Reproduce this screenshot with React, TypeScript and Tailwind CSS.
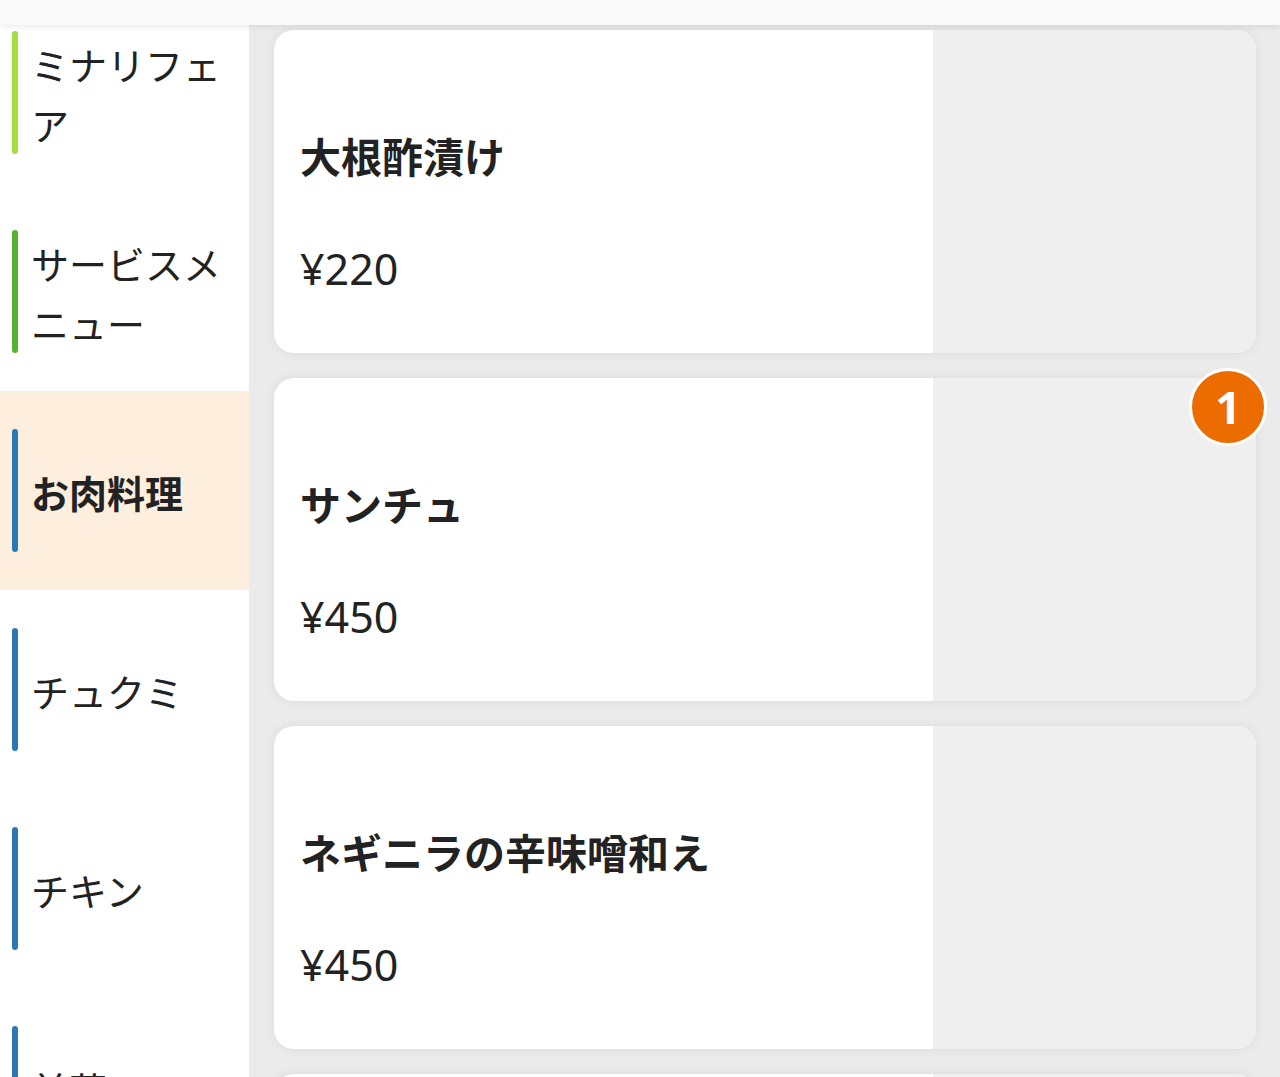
import React from 'react';

type Category = { name: string; color: string; active?: boolean };
type Item = { name: string; price: number; count?: number };

const categories: Category[] = [
  { name: 'ミナリフェア', color: 'bg-[#a6dd3f]' },
  { name: 'サービスメニュー', color: 'bg-[#58b22f]' },
  { name: 'お肉料理', color: 'bg-[#2b78b5]', active: true },
  { name: 'チュクミ', color: 'bg-[#2b78b5]' },
  { name: 'チキン', color: 'bg-[#2b78b5]' },
  { name: '前菜', color: 'bg-[#2b78b5]' },
];

const items: Item[] = [
  { name: '大根酢漬け', price: 220 },
  { name: 'サンチュ', price: 450, count: 1 },
  { name: 'ネギニラの辛味噌和え', price: 450 },
  { name: 'チャプチェ', price: 550 },
];

const App: React.FC = () => {
  return (
    <div
      className="relative h-[1077px] w-[1280px] overflow-hidden bg-[#ebebeb] text-[#222]"
      style={{ fontFamily: '"Noto Sans", "Noto Sans CJK JP", sans-serif' }}
    >
      {/* Header */}
      <div className="absolute left-0 right-0 top-0 z-20 h-[25px] bg-[#f9f9f9] shadow-[0_2px_6px_rgba(0,0,0,0.08)]"></div>

      <div className="flex h-full">
        {/* Category sidebar */}
        <div className="w-[249px] shrink-0 bg-white">
          <div className="-mt-[7px] flex flex-col">
            {categories.map((cat) => (
              <div
                key={cat.name}
                className={`flex h-[199px] items-center pr-3 ${cat.active ? 'bg-[#fdeedd]' : ''}`}
              >
                <div className="ml-3 flex h-[123px] items-center">
                  <div className={`h-full w-[6px] shrink-0 rounded-full ${cat.color}`}></div>
                  <span
                    className={`ml-[13px] mt-[5px] text-[38px] leading-[60px] ${cat.active ? 'font-bold' : ''}`}
                  >
                    {cat.name}
                  </span>
                </div>
              </div>
            ))}
          </div>
        </div>

        {/* Menu list */}
        <div className="flex flex-1 flex-col gap-[25px] pl-[25px] pr-[24px] pt-[30px]">
          {items.map((item) => (
            <div
              key={item.name}
              className="relative flex h-[323px] shrink-0 rounded-[20px] bg-white shadow-[0_0_12px_rgba(0,0,0,0.07)]"
            >
              <div className="flex flex-1 flex-col pl-[26px] pt-[97px]">
                <p className="text-[41px] font-bold leading-[60px]">{item.name}</p>
                <p className="mt-[52px] text-[43px] leading-[60px]">¥{item.price}</p>
              </div>
              <div className="h-[323px] w-[323px] rounded-r-[20px] bg-[#efefef]"></div>
              {item.count && (
                <div className="absolute -right-[11px] -top-[10px] flex h-[78px] w-[78px] items-center justify-center rounded-full border-[3px] border-white bg-[#ec6c00] text-[45px] font-bold text-white">
                  {item.count}
                </div>
              )}
            </div>
          ))}
        </div>
      </div>
    </div>
  );
};

export default App;
